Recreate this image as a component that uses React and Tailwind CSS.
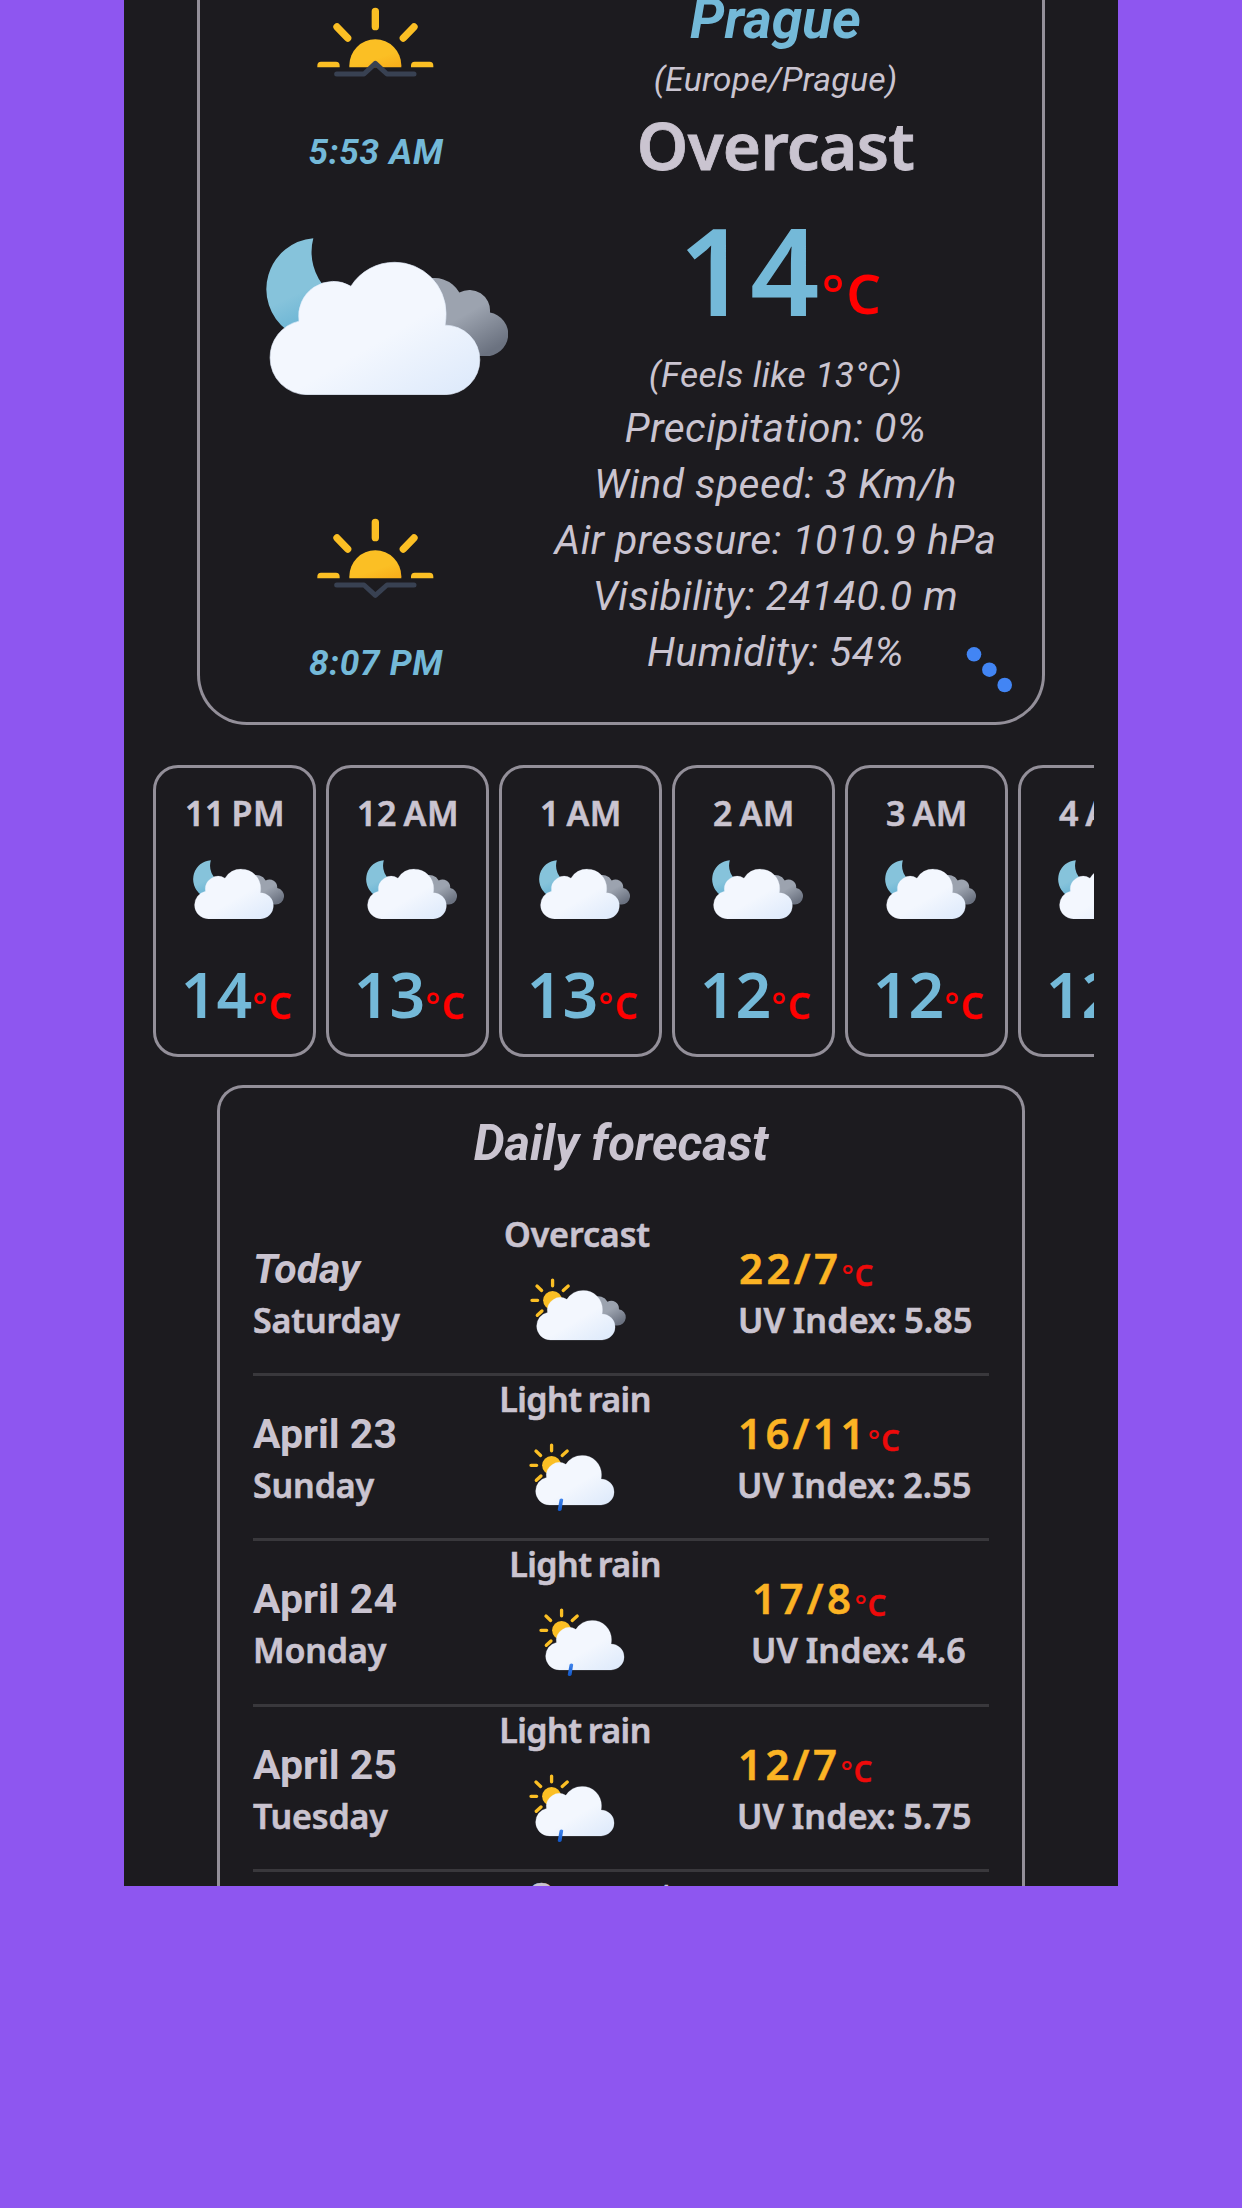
import React from "react";

const CLOUD =
  "M352 1184A111 111 0 0 1 241 1073A111 111 0 0 1 328 963A104 104 0 0 1 484 858A155 154 0 0 1 616 786A154 154 0 0 1 770 940Q770 958 767 975A104.5 104.5 0 0 1 767 1184Z";

function CloudShape() {
  return <path d={CLOUD} fill="url(#cloud)" stroke="#e6effc" strokeWidth="2" />;
}

function DarkCloudShape() {
  return (
    <path
      d="M700 841A86 86 0 0 1 810 877A62 62 0 0 1 902 937A66 66 0 0 1 888 1068H700Z"
      fill="url(#darkCloud)"
    />
  );
}

function Gradients() {
  return (
    <svg className="absolute size-0" aria-hidden="true">
      <defs>
        <linearGradient id="cloud" gradientUnits="userSpaceOnUse" x1="440" y1="850" x2="680" y2="1260">
          <stop offset="0" stopColor="#f3f7fe" />
          <stop offset="0.45" stopColor="#f3f7fe" />
          <stop offset="1" stopColor="#deeafb" />
        </linearGradient>
        <linearGradient id="darkCloud" gradientUnits="userSpaceOnUse" x1="770" y1="850" x2="890" y2="1060">
          <stop offset="0" stopColor="#9ca3af" />
          <stop offset="0.45" stopColor="#9ca3af" />
          <stop offset="1" stopColor="#6b7280" />
        </linearGradient>
        <linearGradient id="moon" gradientUnits="userSpaceOnUse" x1="270" y1="750" x2="380" y2="980">
          <stop offset="0" stopColor="#86c3db" />
          <stop offset="0.55" stopColor="#86c3db" />
          <stop offset="1" stopColor="#66b2d3" />
        </linearGradient>
        <linearGradient id="sun" gradientUnits="objectBoundingBox" x1="0.25" y1="0.1" x2="0.8" y2="1">
          <stop offset="0" stopColor="#fbbf24" />
          <stop offset="0.6" stopColor="#fbbf24" />
          <stop offset="1" stopColor="#f8af1b" />
        </linearGradient>
        <linearGradient id="drop" x1="0" y1="0" x2="0" y2="1">
          <stop offset="0" stopColor="#4286ee" />
          <stop offset="1" stopColor="#0f56c8" />
        </linearGradient>
      </defs>
    </svg>
  );
}

function NightIcon({ className }) {
  return (
    <svg viewBox="230 713 725 472" className={className}>
      <path
        d="M371 714A153.6 153.6 0 0 0 290 989L420 960L412 868A161 161 0 0 1 371 714Z"
        fill="url(#moon)"
      />
      <DarkCloudShape />
      <CloudShape />
    </svg>
  );
}

function DayIcon({ rain, className }) {
  return (
    <svg viewBox="992 623 289 204" className={className}>
      <g stroke="#fbbf24" strokeWidth="10" strokeLinecap="round">
        <path d="M1060 629V646M1107 647L1092 660M1013 647L1027 660M998 690H1015M1014 735L1028 722" />
      </g>
      <circle cx="1060" cy="690" r="28.5" fill="url(#sun)" />
      <g transform="translate(1012 660) scale(0.3746) translate(-241 -786)">
        {!rain && <DarkCloudShape />}
        <CloudShape />
      </g>
      {rain && (
        <path d="M1084 793Q1089.500 786 1095 793L1090 824Q1083.500 831 1078.500 824Z" fill="url(#drop)" />
      )}
    </svg>
  );
}

function HorizonIcon({ set }) {
  return (
    <svg viewBox="381 20 351 240" className="block h-[80px] w-[117px]">
      <g stroke="#fbbf24" strokeWidth="22" strokeLinecap="round">
        <path d="M556 33V79M441 80L473 113M672 80L640 113" />
      </g>
      <path
        d="M382 201V196Q382 184 393 184H438Q449 184 449 196V201ZM663 201V196Q663 184 674 184H719Q730 184 730 196V201Z"
        fill="#fbbf24"
      />
      <path d="M478 201V195A78 78 0 0 1 634 195V201Z" fill="url(#sun)" />
      <path
        d={set ? "M440 221H522L556 252L591 221H672" : "M440 221H522L556 189L591 221H672"}
        fill="none"
        stroke="#384152"
        strokeWidth="15"
        strokeLinecap="round"
        strokeLinejoin="round"
      />
    </svg>
  );
}

const details = [
  "Precipitation: 0%",
  "Wind speed: 3 Km/h",
  "Air pressure: 1010.9 hPa",
  "Visibility: 24140.0 m",
  "Humidity: 54%",
];

const hours = [
  ["11 PM", 14],
  ["12 AM", 13],
  ["1 AM", 13],
  ["2 AM", 12],
  ["3 AM", 12],
  ["4 AM", 12],
];

const days = [
  { date: "Today", day: "Saturday", sky: "Overcast", temp: "22/7", uv: "5.85", mid: "ml-[239px]", icon: "ml-[38px]", end: "ml-[77px]" },
  { date: "April 23", day: "Sunday", sky: "Light rain", rain: true, temp: "16/11", uv: "2.55", mid: "ml-[237px]", icon: "ml-[39px]", end: "ml-[78px]" },
  { date: "April 24", day: "Monday", sky: "Light rain", rain: true, temp: "17/8", uv: "4.6", mid: "ml-[247px]", icon: "ml-[39px]", end: "ml-[82px]" },
  { date: "April 25", day: "Tuesday", sky: "Light rain", rain: true, temp: "12/7", uv: "5.75", mid: "ml-[237px]", icon: "ml-[39px]", end: "ml-[78px]" },
  { date: "April 26", day: "Wednesday", sky: "Overcast", temp: "14/6", uv: "4.9", mid: "ml-[263px]", icon: "ml-[38px]", end: "ml-[76px]" },
];

function CurrentWeather() {
  return (
    <section className="relative ml-[73px] flex h-[725px] w-[848px] shrink-0 rounded-b-[50px] border-x-[3px] border-b-[3px] border-[#938f99]">
      <div className="flex w-[351px] shrink-0 flex-col items-center pt-[7px]">
        <HorizonIcon />
        <p className="mt-[45px] pl-[1px] font-['Roboto',sans-serif] text-[35.2px] font-bold leading-[40px] tracking-[0.7px] text-[#74b9d8] italic">
          5:53 AM
        </p>
        <NightIcon className="mt-[66px] ml-[23px] block h-[157px] w-[242px]" />
        <div className="mt-[123px]">
          <HorizonIcon set />
        </div>
        <p className="mt-[45px] pl-[1px] font-['Roboto',sans-serif] text-[35.2px] font-bold leading-[40px] tracking-[0.7px] text-[#74b9d8] italic">
          8:07 PM
        </p>
      </div>
      <div className="flex w-[449px] shrink-0 flex-col items-center font-['Roboto',sans-serif] whitespace-nowrap text-[#cac4d0]">
        <h1 className="text-[55px] font-bold leading-[39px] text-[#74b9d8] italic">Prague</h1>
        <p className="mt-[21px] text-[33.8px] leading-[40px] tracking-[0.2px] italic">(Europe/Prague)</p>
        <p className="font-['Noto_Sans',sans-serif] text-[65.5px] font-semibold leading-[90px] tracking-[-0.7px] [-webkit-text-stroke:0.8px_currentColor]">
          Overcast
        </p>
        <p className="pl-[10px] font-['Noto_Sans',sans-serif] text-[121.4px] font-semibold leading-[159px] text-[#74b9d8]">
          <span className="tracking-[2px]">14</span>
          <span className="align-[2px] text-[54.5px] leading-none tracking-[1.5px] text-[#ff0000]">
            <span className="font-medium">°</span>C
          </span>
        </p>
        <p className="-mb-[2px] text-[35.4px] leading-[53px] tracking-[0.35px] italic">(Feels like 13°C)</p>
        {details.map((d) => (
          <p key={d} className="text-[40.6px] leading-[56.1px] tracking-[0.55px] italic">
            {d}
          </p>
        ))}
      </div>
      <svg viewBox="0 0 48 48" className="absolute top-[646px] left-[766px] size-[48px]" fill="#4285f4">
        <circle cx="8" cy="8.300" r="7.300" />
        <circle cx="23.400" cy="23.700" r="7.300" />
        <circle cx="38.700" cy="39" r="7.300" />
      </svg>
    </section>
  );
}

function HourlyForecast() {
  return (
    <section className="mx-[24px] mt-[40px] flex h-[292px] shrink-0 gap-[10px] overflow-hidden pl-[5px]">
      {hours.map(([time, temp]) => (
        <div
          key={time}
          className="flex w-[163px] shrink-0 flex-col items-center rounded-[25px] border-[3px] border-[#938f99] font-['Noto_Sans',sans-serif] font-semibold whitespace-nowrap"
        >
          <p className="pl-[1px] text-[34px] leading-[91px] tracking-[0.6px] text-[#cac4d0] [-webkit-text-stroke:0.6px_currentColor] [word-spacing:-3px]">
            {time}
          </p>
          <NightIcon className="mt-[1px] ml-[8px] block h-[59px] w-[91px] shrink-0" />
          <p className="mt-[34px] pl-[5px] text-[62.5px] leading-[81px] text-[#74b9d8]">
            {temp}
            <span className="align-[-1px] text-[35.5px] leading-none tracking-[1.5px] text-[#ff0000] [-webkit-text-stroke:0.5px_currentColor]">
              <span className="font-medium [-webkit-text-stroke:0px]">°</span>C
            </span>
          </p>
        </div>
      ))}
    </section>
  );
}

function DayRow({ d, first }) {
  return (
    <div className="h-[165.33px] shrink-0 font-['Noto_Sans',sans-serif] text-[34px] font-semibold whitespace-nowrap text-[#cac4d0]">
      <div className="flex h-[162.33px]">
        <div className="w-0 pt-[29px]">
          <p
            className={
              first
                ? "font-['Roboto',sans-serif] text-[41px] font-bold leading-[59px] italic"
                : "font-['Roboto',sans-serif] text-[41px] font-bold leading-[59px]"
            }
          >
            {d.date}
          </p>
          <p className="pt-[1px] leading-[41px] tracking-[-0.15px] [-webkit-text-stroke:0.6px_currentColor]">{d.day}</p>
        </div>
        <div className={`w-[170px] ${d.mid}`}>
          <p
            className={
              d.rain
                ? "text-center leading-[46px] tracking-[-0.55px] [-webkit-text-stroke:0.6px_currentColor] [word-spacing:-2px]"
                : "text-center leading-[46px] tracking-[-0.1px] [-webkit-text-stroke:0.6px_currentColor]"
            }
          >
            {d.sky}
          </p>
          <DayIcon rain={d.rain} className={`mt-[21px] block h-[68px] w-[96px] ${d.icon}`} />
        </div>
        <div className={`pt-[27px] ${d.end}`}>
          <p className="text-[42px] leading-[60px] tracking-[3.4px] text-[#fbb324] [-webkit-text-stroke:0.5px_currentColor]">
            {d.temp}
            <span className="align-[-2px] text-[29px] leading-none tracking-[1px] text-[#ee0a0a]">
              <span className="font-medium [-webkit-text-stroke:0px]">°</span>C
            </span>
          </p>
          <p className="mt-[2px] -ml-[1px] leading-[41px] tracking-[0.15px] [-webkit-text-stroke:0.6px_currentColor] [word-spacing:-1.5px]">
            UV Index: {d.uv}
          </p>
        </div>
      </div>
      <div className="h-[3px] bg-[#39383c]" />
    </div>
  );
}

function DailyForecast() {
  return (
    <section className="ml-[93px] mt-[28px] flex w-[808px] grow flex-col overflow-hidden rounded-t-[26px] border-x-[3px] border-t-[3px] border-[#938f99]">
      <h2 className="mb-[10.700px] shrink-0 text-center font-['Roboto',sans-serif] text-[49px] font-bold leading-[112px] text-[#cac4d0] italic">
        Daily forecast
      </h2>
      <div className="flex flex-col px-[33px]">
        {days.map((d, i) => (
          <DayRow key={d.date} d={d} first={i === 0} />
        ))}
      </div>
    </section>
  );
}

export default function App() {
  return (
    <div className="h-[2208px] w-[1242px] overflow-hidden bg-[#8e56f0]">
      <Gradients />
      <main className="mx-auto flex h-[1886px] w-[994px] flex-col overflow-hidden bg-[#1c1b1f]">
        <CurrentWeather />
        <HourlyForecast />
        <DailyForecast />
      </main>
    </div>
  );
}
